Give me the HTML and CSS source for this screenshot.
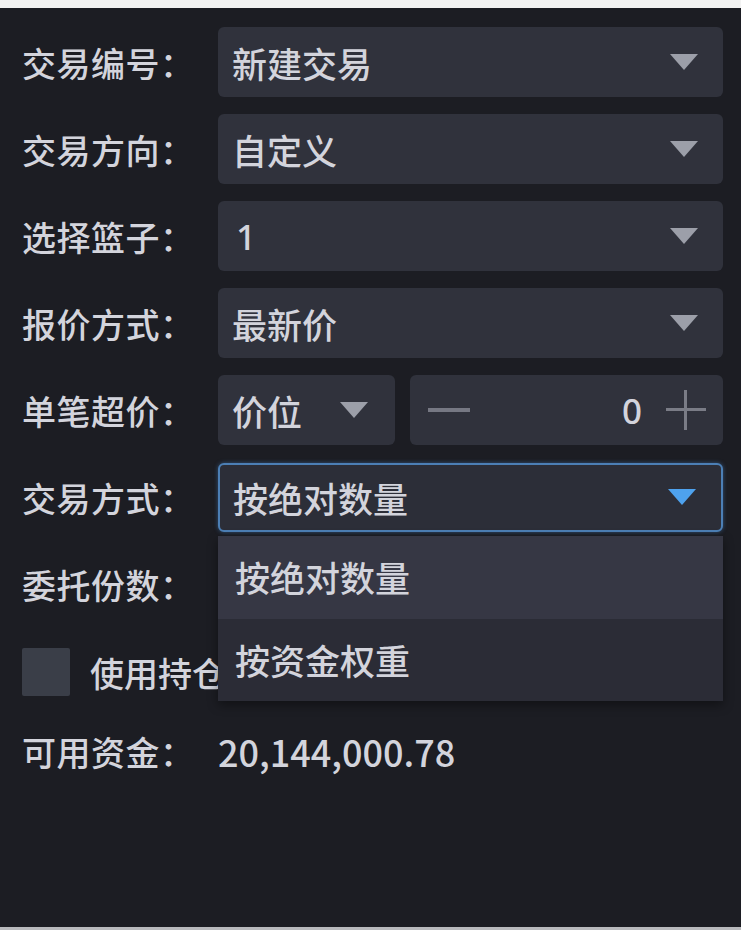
FILE: index.html
```html
<!DOCTYPE html>
<html lang="zh-CN">
<head>
  <meta charset="UTF-8">
  <meta name="viewport" content="width=device-width, initial-scale=1.0">
  <title>交易下单</title>
  <link rel="stylesheet" href="styles.css">
</head>
<body>
  <div class="topbar"></div>
  <div class="panel">
    <div class="row">
      <span class="label">交易编号：</span>
      <div class="select"><span>新建交易</span><i class="arrow"></i></div>
    </div>
    <div class="row">
      <span class="label">交易方向：</span>
      <div class="select"><span>自定义</span><i class="arrow"></i></div>
    </div>
    <div class="row">
      <span class="label">选择篮子：</span>
      <div class="select"><span class="num">1</span><i class="arrow"></i></div>
    </div>
    <div class="row">
      <span class="label">报价方式：</span>
      <div class="select"><span>最新价</span><i class="arrow"></i></div>
    </div>
    <div class="row">
      <span class="label">单笔超价：</span>
      <div class="split">
        <div class="select small"><span>价位</span><i class="arrow"></i></div>
        <div class="stepper">
          <span class="minus"></span>
          <span class="step-value">0</span>
          <span class="plus"></span>
        </div>
      </div>
    </div>
    <div class="row">
      <span class="label">交易方式：</span>
      <div class="select-wrap">
        <div class="select open"><span>按绝对数量</span><i class="arrow"></i></div>
        <ul class="dropdown">
          <li class="active">按绝对数量</li>
          <li>按资金权重</li>
        </ul>
      </div>
    </div>
    <div class="row">
      <span class="label">委托份数：</span>
      <div class="select blank"></div>
    </div>
    <div class="row">
      <label class="check"><span class="box"></span><span>使用持仓</span></label>
    </div>
    <div class="row last">
      <span class="label">可用资金：</span>
      <span class="amount">20,144,000.78</span>
    </div>
  </div>
  <div class="bottombar"></div>
</body>
</html>
```

FILE: styles.css
```css
html, body {
  margin: 0;
  height: 100%;
}

body {
  display: flex;
  flex-direction: column;
  background: #1c1d23;
  font-family: "Noto Sans CJK SC", "Noto Sans", sans-serif;
  font-weight: 500;
  color: #d3d4dc;
  overflow: hidden;
}

.topbar {
  height: 8px;
  background: #f2f2f2;
}

.bottombar {
  height: 3px;
  background: #b9babd;
}

.panel {
  flex: 1;
  display: flex;
  flex-direction: column;
  gap: 17px;
  padding: 19px 18px 0 22px;
}

.row {
  display: flex;
  align-items: center;
  height: 70px;
  font-size: 35px;
}

.row.last {
  margin-top: -7px;
}

.label {
  width: 196px;
  flex-shrink: 0;
  font-size: 34px;
  letter-spacing: 0.5px;
}

.select {
  flex: 1;
  height: 70px;
  box-sizing: border-box;
  display: flex;
  align-items: center;
  justify-content: space-between;
  padding: 0 25px 0 14px;
  background: #30323c;
  border-radius: 6px;
}

.select .num {
  font-family: "Noto Sans", sans-serif;
  padding-left: 4px;
}

.arrow {
  width: 0;
  height: 0;
  border-left: 14px solid transparent;
  border-right: 14px solid transparent;
  border-top: 16px solid #9c9fa9;
}

.split {
  flex: 1;
  display: flex;
  gap: 15px;
}

.select.small {
  flex: 0 0 177px;
  padding-right: 27px;
}

.stepper {
  flex: 1;
  height: 70px;
  display: flex;
  align-items: center;
  padding: 0 17px 0 18px;
  background: #30323c;
  border-radius: 6px;
}

.minus {
  width: 42px;
  height: 4px;
  background: #767883;
}

.step-value {
  flex: 1;
  text-align: right;
  padding-right: 24px;
  font-family: "Noto Sans", sans-serif;
}

.plus {
  position: relative;
  width: 40px;
  height: 40px;
}

.plus::before,
.plus::after {
  content: "";
  position: absolute;
  background: #7a7c86;
}

.plus::before {
  left: 0;
  right: 0;
  top: 18px;
  height: 3px;
}

.plus::after {
  top: 0;
  bottom: 0;
  left: 18px;
  width: 3px;
}

.select-wrap {
  flex: 1;
  position: relative;
}

.select.open {
  height: 69px;
  background: #2c2e38;
  border: 2px solid #4c7fb5;
  box-shadow: 0 0 4px rgba(76, 140, 210, 0.5);
  padding-left: 13px;
}

.select.open .arrow {
  border-top-color: #4ea2ee;
}

.dropdown {
  position: absolute;
  left: 0;
  right: 0;
  top: 73px;
  margin: 0;
  padding: 0;
  list-style: none;
  z-index: 2;
  box-shadow: 0 4px 10px rgba(0, 0, 0, 0.4);
}

.dropdown li {
  height: 82px;
  line-height: 82px;
  padding-left: 17px;
  background: #2b2c36;
}

.dropdown li.active {
  height: 83px;
  background: #363744;
}

.check {
  display: flex;
  align-items: center;
  gap: 20px;
  padding-top: 2px;
  font-size: 34px;
}

.check .box {
  width: 48px;
  height: 48px;
  background: #3a3e48;
  border-radius: 2px;
}

.amount {
  font-size: 36px;
}
```
